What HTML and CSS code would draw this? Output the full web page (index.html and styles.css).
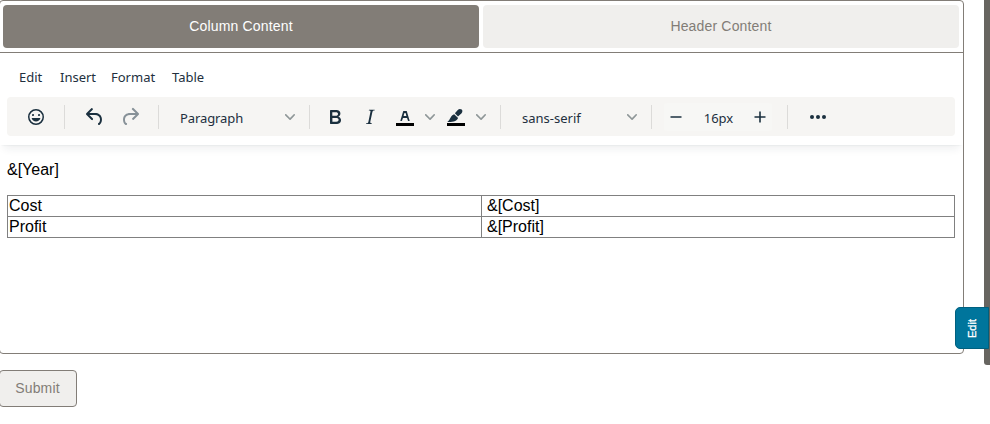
FILE: index.html
```html
<!DOCTYPE html>
<html lang="en">
<head>
<meta charset="utf-8">
<title>Column Content</title>
<link rel="stylesheet" href="styles.css">
</head>
<body>
<main class="card">
  <div class="tabs">
    <button class="tab tab-active">Column Content</button>
    <button class="tab">Header Content</button>
  </div>
  <div class="editor-header">
    <nav class="menubar"><span class="m-edit">Edit</span><span class="m-insert">Insert</span><span class="m-format">Format</span><span>Table</span></nav>
    <div class="toolbar">
      <div class="group g-emoji">
        <span class="tool"><svg class="icon" viewBox="0 0 24 24"><path d="M9 11c.6 0 1-.4 1-1s-.4-1-1-1a1 1 0 0 0-1 1c0 .6.4 1 1 1Zm6 0c.6 0 1-.4 1-1s-.4-1-1-1a1 1 0 0 0-1 1c0 .6.4 1 1 1Zm-3 5.5c2.1 0 4-1.5 4.4-3.5H7.6c.5 2 2.3 3.5 4.4 3.5ZM12 4a8 8 0 1 0 0 16 8 8 0 0 0 0-16Zm0 14.5a6.5 6.5 0 1 1 0-13 6.5 6.5 0 0 1 0 13Z" fill-rule="evenodd"/></svg></span>
      </div>
      <div class="group g-history">
        <span class="tool"><svg class="icon" viewBox="0 0 24 24"><path d="M6.4 8H12c3.7 0 6.2 2 6.8 5.1.6 2.7-.4 5.6-2.3 6.8a1 1 0 0 1-1-1.8c1.1-.6 1.8-2.7 1.4-4.6-.5-2.1-2.1-3.500-4.900-3.500H6.400l3.300 3.300a1 1 0 1 1-1.400 1.400l-5-5a1 1 0 0 1 0-1.400l5-5a1 1 0 0 1 1.400 1.400L6.400 8Z"/></svg></span>
        <span class="tool disabled"><svg class="icon" viewBox="0 0 24 24"><path d="M17.6 10H12c-2.8 0-4.4 1.4-4.9 3.5-.4 2 .3 4 1.4 4.6a1 1 0 1 1-1 1.8c-2-1.2-2.9-4.1-2.3-6.8.6-3 3-5.1 6.8-5.1h5.6l-3.3-3.3a1 1 0 1 1 1.4-1.4l5 5a1 1 0 0 1 0 1.4l-5 5a1 1 0 0 1-1.4-1.4l3.3-3.3Z"/></svg></span>
      </div>
      <div class="group g-block">
        <span class="select-label">Paragraph</span>
        <svg class="chevron" viewBox="0 0 10 10"><path d="M8.7 2.2c.3-.3.8-.3 1 0 .4.4.4.9 0 1.2L5.7 7.8c-.3.3-.9.3-1.2 0L.2 3.4a.8.8 0 0 1 0-1.2c.3-.3.8-.3 1.1 0L5 6l3.7-3.8Z"/></svg>
      </div>
      <div class="group g-format">
        <span class="tool"><svg class="icon" viewBox="0 0 24 24"><path fill-rule="evenodd" d="M7.8 19c-.3 0-.5 0-.6-.2l-.2-.5V5.7c0-.2 0-.4.2-.5l.6-.2h5c1.5 0 2.7.3 3.5 1 .7.6 1.1 1.4 1.1 2.5a3 3 0 0 1-.6 1.9c-.4.6-1 1-1.6 1.2.4.1.9.3 1.3.6s.8.7 1 1.2c.4.4.5 1 .5 1.6 0 1.3-.4 2.3-1.3 3-.8.7-2.1 1-3.8 1H7.8Zm5-8.3c.6 0 1.2-.1 1.6-.5.4-.3.6-.7.6-1.3 0-1.1-.8-1.7-2.3-1.7H9.3v3.5h3.4Zm.5 6c.7 0 1.3-.1 1.7-.4.4-.4.6-.9.6-1.5s-.2-1-.7-1.4c-.4-.3-1-.4-2-.4H9.4v3.8h4Z"/></svg></span>
        <span class="tool"><svg class="icon" viewBox="0 0 24 24"><path d="m16.7 4.7-.1.9h-.3c-.6 0-1 0-1.4.3-.3.3-.4.6-.5 1.1l-2.1 9.8v.6c0 .5.4.8 1.4.8h.2l-.2.8H8l.2-.8h.2c1.1 0 1.8-.5 2-1.5l2-9.8.1-.5c0-.6-.4-.8-1.4-.8h-.3l.2-.9h5.8Z"/></svg></span>
        <span class="tool"><svg class="icon" viewBox="0 0 24 24"><path class="swatch" d="M3 18h18v3H3z"/><path fill-rule="evenodd" d="M8.7 16h-.8a.5.5 0 0 1-.5-.6l2.7-9c.1-.3.3-.4.5-.4h2.8c.2 0 .4.1.5.4l2.7 9a.5.5 0 0 1-.5.6h-.8a.5.5 0 0 1-.4-.4l-.7-2.2c0-.3-.3-.4-.5-.4h-3.4c-.2 0-.4.1-.5.4l-.7 2.2c0 .3-.2.4-.4.4Zm2.6-7.6-.6 2a.5.5 0 0 0 .5.6h1.6a.5.5 0 0 0 .5-.6l-.6-2c0-.3-.3-.4-.5-.4h-.4c-.2 0-.4.1-.5.4Z"/></svg></span>
        <span class="split"><svg class="chevron" viewBox="0 0 10 10"><path d="M8.7 2.2c.3-.3.8-.3 1 0 .4.4.4.9 0 1.2L5.7 7.8c-.3.3-.9.3-1.2 0L.2 3.4a.8.8 0 0 1 0-1.2c.3-.3.8-.3 1.1 0L5 6l3.7-3.8Z"/></svg></span>
        <span class="tool"><svg class="icon" viewBox="0 0 24 24"><path class="swatch" d="M3 18h18v3H3z"/><path d="M3.300 17c1.700-1.200 2.400-2.700 3.200-4.200C7.500 10.900 8.500 9.700 10.200 9.200l3.900 3.900c-.8 1.900-2.300 3.100-4.300 3.400-2.100.4-4.300.5-6.500.5ZM10.900 8.300l3.100-3.600c1-1 2.700-1.100 3.700-.1s.9 2.700-.1 3.700l-3.600 3.100Z"/></svg></span>
        <span class="split"><svg class="chevron" viewBox="0 0 10 10"><path d="M8.7 2.2c.3-.3.8-.3 1 0 .4.4.4.9 0 1.2L5.7 7.8c-.3.3-.9.3-1.2 0L.2 3.4a.8.8 0 0 1 0-1.2c.3-.3.8-.3 1.1 0L5 6l3.7-3.8Z"/></svg></span>
      </div>
      <div class="group g-font">
        <span class="select-label">sans-serif</span>
        <svg class="chevron" viewBox="0 0 10 10"><path d="M8.7 2.2c.3-.3.8-.3 1 0 .4.4.4.9 0 1.2L5.7 7.8c-.3.3-.9.3-1.2 0L.2 3.4a.8.8 0 0 1 0-1.2c.3-.3.8-.3 1.1 0L5 6l3.7-3.8Z"/></svg>
      </div>
      <div class="group g-size">
        <div class="stepper">
          <svg class="icon" viewBox="0 0 24 24"><path d="M6.5 11.200h11v1.600h-11z"/></svg>
          <span>16px</span>
          <svg class="icon" viewBox="0 0 24 24"><path d="M11.200 6.500h1.600v4.700h4.700v1.600h-4.700v4.700h-1.600v-4.700H6.500v-1.600h4.700z"/></svg>
        </div>
      </div>
      <div class="group g-more">
        <span class="tool"><svg class="icon" viewBox="0 0 24 24"><circle cx="6" cy="12" r="2"/><circle cx="12" cy="12" r="2"/><circle cx="18" cy="12" r="2"/></svg></span>
      </div>
    </div>
  </div>
  <div class="document">
    <p>&amp;[Year]</p>
    <table>
      <tr><td>Cost</td><td class="value">&amp;[Cost]</td></tr>
      <tr><td>Profit</td><td class="value">&amp;[Profit]</td></tr>
    </table>
  </div>
</main>
<button class="submit">Submit</button>
<div class="scrollbar"></div>
<div class="side-tab"><span>Edit</span></div>
</body>
</html>
```
FILE: styles.css
```css
* { box-sizing: border-box; }
body {
  margin: 0;
  height: 424px;
  overflow: hidden;
  position: relative;
  background: #fff;
  font-family: "Liberation Sans", Arial, sans-serif;
}
button { font-family: inherit; }
.card {
  width: 965px;
  height: 354px;
  margin-left: -1px;
  border: 1px solid #827d77;
  border-radius: 4px;
  overflow: hidden;
}
.tabs {
  display: flex;
  gap: 4px;
  height: 52px;
  padding: 4px 4px 4px 3px;
  border-bottom: 1px solid #827d77;
}
.tab {
  flex: 1;
  padding: 0 0 2px;
  border: 0;
  border-radius: 4px;
  background: #f0efed;
  color: #827d77;
  font-size: 14px;
  letter-spacing: .17px;
}
.tab-active { background: #827d77; color: #fff; }
.editor-header {
  height: 92px;
  padding: 9px 8px 9px 7px;
  box-shadow: 0 2px 2px -2px rgba(34,47,62,.1), 0 8px 8px -4px rgba(34,47,62,.07);
  color: #222f3e;
  font-family: "Noto Sans", sans-serif;
  font-size: 13px;
}
.menubar {
  display: flex;
  height: 35px;
  padding-left: 12px;
  line-height: 31px;
}
.m-edit { width: 41px; }
.m-insert { width: 51px; }
.m-format { width: 61px; }
.toolbar {
  display: flex;
  height: 39px;
  border-radius: 4px;
  background: #f6f5f3;
}
.group {
  display: flex;
  align-items: center;
  flex: none;
  height: 24px;
  margin: 8px 0 7px;
  border-right: 1px solid #dcdbd9;
}
.icon { display: block; flex: none; width: 24px; height: 24px; fill: #1b303f; }
.swatch { fill: #000; }
.tool { display: block; }
.disabled { opacity: .5; }
.chevron { display: block; flex: none; width: 10px; height: 10px; fill: #8f9798; }
.g-emoji { width: 58px; padding-left: 17px; }
.g-history { width: 94px; padding-left: 18px; gap: 11px; }
.g-block { width: 151px; padding: 0 14px 0 21px; justify-content: space-between; }
.g-block .select-label { letter-spacing: -.1px; }
.g-format { width: 191px; padding-left: 13px; }
.g-format .tool { width: 24px; }
.g-format .tool + .tool { margin-left: 11px; }
.split { width: 10px; margin: 0 9px 0 8px; }
.split:last-child { margin-right: 0; }
.g-font { width: 151px; padding: 0 14px 0 21px; justify-content: space-between; }
.select-label { line-height: 24px; padding-top: 2px; }
.g-size { width: 136px; padding-left: 12px; }
.stepper {
  display: flex;
  align-items: center;
  justify-content: space-between;
  flex: none;
  width: 108px;
  height: 28px;
  border-radius: 3px;
  background: #f7f7f5;
}
.stepper span { padding: 2px 0 0 1px; }
.g-more { padding-left: 18px; border: 0; }
.document { padding: 15px 8px 0 7px; color: #000; font-size: 16px; }
.document p { margin: 0 0 16px; line-height: 19px; }
.document table {
  width: 100%;
  border-collapse: collapse;
  table-layout: fixed;
}
.document td {
  height: 21px;
  padding: 0 1px;
  border: 1px solid #808080;
  line-height: 18px;
}
.document .value { padding-left: 5.5px; }
.submit {
  display: block;
  width: 78px;
  height: 37px;
  margin: 16px 0 0 -1px;
  padding: 0 1px 2px 0;
  border: 1px solid #827d77;
  border-radius: 4px;
  background: #f0efed;
  color: #827d77;
  font-size: 14px;
  letter-spacing: .15px;
}
.scrollbar {
  position: absolute;
  top: -8px;
  right: 0;
  width: 6px;
  height: 373px;
  border-radius: 3px 0 0 3px;
  background: #676560;
}
.side-tab {
  position: absolute;
  top: 307px;
  right: 1px;
  display: flex;
  align-items: center;
  justify-content: center;
  width: 34px;
  height: 42px;
  border: 1px solid #00607f;
  border-radius: 5px 0 0 5px;
  background: #00759c;
  color: #fff;
  font-size: 11px;
  -webkit-text-stroke: .3px #fff;
}
.side-tab span { writing-mode: vertical-rl; transform: rotate(180deg); }
```
